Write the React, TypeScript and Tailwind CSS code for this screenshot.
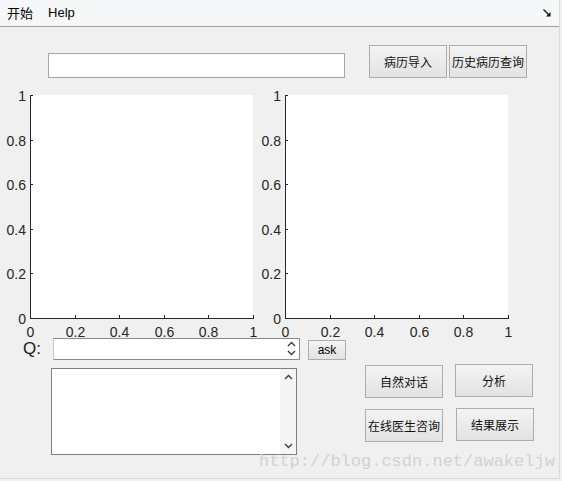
import React from 'react';

const ticks = [0, 0.2, 0.4, 0.6, 0.8, 1];
const labels = ['0', '0.2', '0.4', '0.6', '0.8', '1'];

// matlab-style axes, box off
function Axes() {
  const x0 = 30;
  const y0 = 230;
  const size = 223;
  return (
    <svg width={255} height={250} className="overflow-visible shrink-0" shapeRendering="crispEdges">
      <rect x={x0} y={y0 - size} width={size} height={size} fill="#ffffff" />
      <line x1={x0 + 0.5} y1={y0 - size} x2={x0 + 0.5} y2={y0 + 1} stroke="#262626" />
      <line x1={x0} y1={y0 + 0.5} x2={x0 + size + 1} y2={y0 + 0.5} stroke="#262626" />
      {ticks.map((t, i) => {
        const px = Math.round(x0 + t * size) + 0.5;
        const py = Math.round(y0 - t * size) + 0.5;
        return (
          <g key={i}>
            <line x1={px} y1={y0} x2={px} y2={y0 - 3} stroke="#262626" />
            <line x1={x0} y1={py} x2={x0 + 3} y2={py} stroke="#262626" />
            <text
              x={26}
              y={py + 5}
              textAnchor="end"
              fontSize={14}
              fontFamily="'Liberation Sans', Arial, sans-serif"
              fill="#262626"
              shapeRendering="auto"
            >
              {labels[i]}
            </text>
            <text
              x={px}
              y={249}
              textAnchor="middle"
              fontSize={14}
              fontFamily="'Liberation Sans', Arial, sans-serif"
              fill="#262626"
              shapeRendering="auto"
            >
              {labels[i]}
            </text>
          </g>
        );
      })}
    </svg>
  );
}

function Btn({ label, className = '' }: { label: string; className?: string }) {
  return (
    <button
      className={
        'flex items-center justify-center border border-[#adadad] bg-gradient-to-b from-[#f4f4f4] to-[#e2e2e2] text-[12px] text-[#111] ' +
        className
      }
    >
      {label}
    </button>
  );
}

function Chevron({ up }: { up?: boolean }) {
  return (
    <svg width={9} height={6} viewBox="0 0 9 6">
      <path d={up ? 'M1 5 L4.5 1.5 L8 5' : 'M1 1 L4.5 4.5 L8 1'} fill="none" stroke="#3c3c3c" strokeWidth={1.4} />
    </svg>
  );
}

export default function App() {
  return (
    <div
      className="relative w-[562px] h-[481px] overflow-hidden bg-[#f0f0f0]"
      style={{ fontFamily: "'Noto Sans CJK SC', 'Liberation Sans', sans-serif" }}
    >
      <div className="w-[560px] h-[479px] border-r border-b border-[#dadada] flex flex-col">
        {/* menu */}
        <div className="h-[27px] shrink-0 flex items-center bg-[#f6f7f9] border-b border-[#a0a0a0] text-[13px] text-black">
          <span className="ml-[7px]">开始</span>
          <span className="ml-[15px] font-['Liberation_Sans',sans-serif]">Help</span>
          <svg className="ml-auto mr-[8px] mt-[-1px]" width={8} height={8} viewBox="0 0 8 8">
            <path d="M0.5 0.5 L5.5 5.5" stroke="#111" strokeWidth={1.3} />
            <path d="M7.5 3 L7.5 7.5 L3 7.5 Z" fill="#111" />
          </svg>
        </div>

        {/* top row */}
        <div className="flex items-start mt-[18px]">
          <div className="ml-[48px] mt-[8px] w-[297px] h-[25px] bg-white border border-[#a5a5a5]" />
          <Btn label="病历导入" className="ml-[24px] w-[78px] h-[33px]" />
          <Btn label="历史病历查询" className="ml-[2px] w-[78px] h-[33px]" />
        </div>

        {/* plots */}
        <div className="flex mt-[10px]">
          <Axes />
          <Axes />
        </div>

        {/* question row */}
        <div className="flex items-start">
          <span className="ml-[23px] w-[30px] mt-[2px] text-[17px] leading-[17px] font-['Liberation_Sans',sans-serif] text-[#1a1a1a]">
            Q:
          </span>
          <div className="relative w-[247px] h-[22px] bg-white border border-[#8a8a8a] border-l-[#c8c8c8]">
            <div className="absolute right-[3px] top-[2px] flex flex-col gap-[3px]">
              <Chevron up />
              <Chevron />
            </div>
          </div>
          <button className="ml-[8px] mt-[2px] w-[38px] h-[20px] border border-[#adadad] bg-gradient-to-b from-[#f4f4f4] to-[#e2e2e2] text-[12px] font-['Liberation_Sans',sans-serif] text-black">
            ask
          </button>
        </div>

        {/* answer + buttons */}
        <div className="flex items-start">
          <div className="ml-[51px] mt-[8px] w-[246px] h-[87px] bg-white border border-[#7f7f7f] flex">
            <div className="flex-1" />
            <div className="w-[16px] bg-[#f5f5f5] flex flex-col items-center justify-between py-[5px]">
              <Chevron up />
              <Chevron />
            </div>
          </div>
          <div className="ml-[68px] mt-[4px] flex gap-[12px]">
            <div className="flex flex-col gap-[11px] mt-[1px]">
              <Btn label="自然对话" className="w-[78px] h-[33px]" />
              <Btn label="在线医生咨询" className="w-[78px] h-[33px]" />
            </div>
            <div className="flex flex-col gap-[11px]">
              <Btn label="分析" className="w-[78px] h-[33px]" />
              <Btn label="结果展示" className="ml-px w-[78px] h-[33px]" />
            </div>
          </div>
        </div>
      </div>

      {/* watermark */}
      <div className="absolute left-[259px] top-[450px] text-[17px] leading-[24px] text-[#d2d2d2] font-['Liberation_Mono',monospace] pointer-events-none">
        http://blog.csdn.net/awakeljw
      </div>
    </div>
  );
}
